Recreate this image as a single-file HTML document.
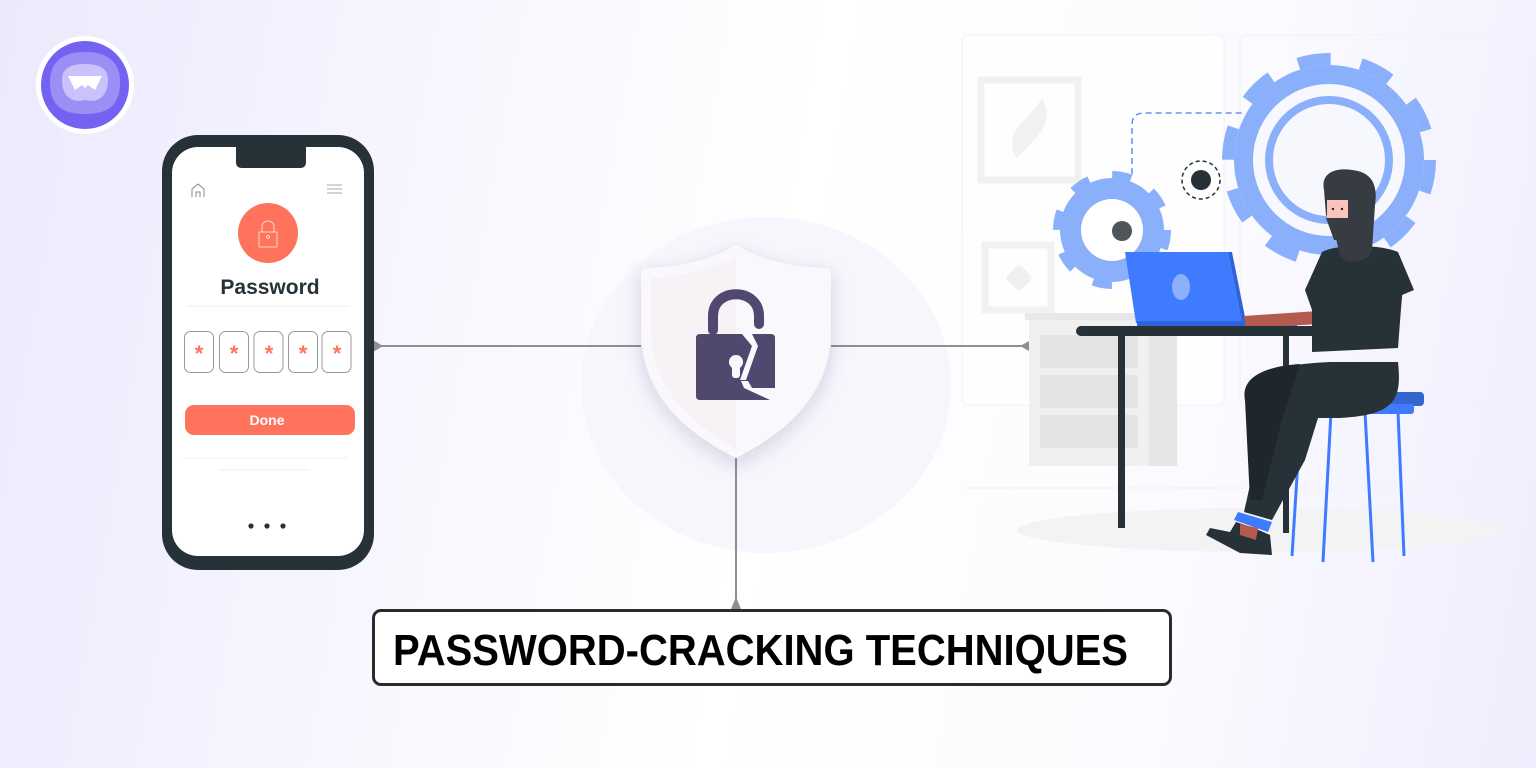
<!DOCTYPE html>
<html><head><meta charset="utf-8"><style>
html,body{margin:0;padding:0}
body{width:1536px;height:768px;overflow:hidden;position:relative;font-family:"Liberation Sans",sans-serif;
background:linear-gradient(100deg,#ece9fd 0%,#f6f5fe 25%,#ffffff 50%,#fbfbff 75%,#efedfd 100%);}
</style></head><body>
<svg width="1536" height="768" viewBox="0 0 1536 768" style="position:absolute;left:0;top:0">
<defs>
<filter id="sh" x="-30%" y="-30%" width="160%" height="160%"><feDropShadow dx="0" dy="6" stdDeviation="9" flood-color="#3b2e6a" flood-opacity="0.18"/></filter>
</defs>
<!-- logo -->
<circle cx="85" cy="85" r="49" fill="#fff"/>
<circle cx="85" cy="85" r="44" fill="#7463f3"/>
<path d="M85 52 C110 52 120 64 120 82 C120 104 110 114 85 114 C60 114 50 104 50 82 C50 64 60 52 85 52Z" fill="#9b8ff5"/>
<path d="M85 64 C102 64 108 70 108 80 C108 94 100 104 85 100 C70 104 62 94 62 80 C62 70 68 64 85 64Z" fill="#c9c2fb"/>
<path d="M68 76 L102 76 L95 90 L88 85 L85 88 L82 85 L75 90 Z" fill="#fff"/>
<!-- blob -->
<ellipse cx="766" cy="385" rx="185" ry="168" fill="#f7f6fc"/>
<!-- right scene bg -->
<rect x="962" y="35" width="262" height="370" rx="6" fill="#fefefe" stroke="#f2f2f5"/>
<rect x="1240" y="35" width="290" height="370" rx="6" fill="none" stroke="#f0f0f5"/>
<rect x="981" y="80" width="97" height="100" fill="none" stroke="#f1f1f1" stroke-width="7"/>
<path d="M1017 158 C1008 145 1012 130 1025 120 L1042 99 C1050 110 1048 125 1036 138Z" fill="#f1f1f1"/>
<rect x="985" y="245" width="66" height="65" fill="none" stroke="#f1f1f1" stroke-width="7"/>
<rect x="1009" y="268" width="20" height="20" rx="4" transform="rotate(45 1019 278)" fill="#f0f0f0"/>
<ellipse cx="1262" cy="530" rx="245" ry="22" fill="#f3f3f4"/>
<line x1="965" y1="488" x2="1500" y2="488" stroke="#f0f0f3"/>
<!-- connectors -->
<line x1="376" y1="346" x2="641" y2="346" stroke="#8f8f8f" stroke-width="2"/>
<polygon points="383,346 373,340 373,352" fill="#8f8f8f"/>
<line x1="831" y1="346" x2="1026" y2="346" stroke="#8f8f8f" stroke-width="2"/>
<polygon points="1020,346 1031,340 1031,352" fill="#8f8f8f"/>
<line x1="736" y1="458" x2="736" y2="603" stroke="#8f8f8f" stroke-width="2"/>
<polygon points="736,597 731,609 741,609" fill="#8f8f8f"/>
<!-- shield -->
<path d="M736 245 C705 263 675 267 647 268 C642 268 641 270 641 276 L641 330 C641 390 680 430 736 458 C792 430 831 390 831 330 L831 276 C831 270 830 268 825 268 C797 267 767 263 736 245Z" fill="#f9f8fd" filter="url(#sh)"/>
<path d="M736 256 C708 272 680 276 651 278 L651 330 C651 385 688 423 736 449Z" fill="#f8f2f6"/>
<!-- lock -->
<path d="M713 330 L713 316 C713 287 759 287 759 316 L759 324" fill="none" stroke="#51486f" stroke-width="10" stroke-linecap="round"/>
<path d="M700 334 L742 334 L752 346 L740 380 L746 380 L758 346 L752 334 L771 334 Q775 334 775 338 L775 388 L752 388 L748 381 L741 381 L744 388 L770 400 L700 400 Q696 400 696 396 L696 338 Q696 334 700 334Z" fill="#51486f"/>
<circle cx="736" cy="362" r="7" fill="#f9f8fd"/>
<rect x="732" y="362" width="8" height="16" rx="3" fill="#f9f8fd"/>
<!-- phone -->
<rect x="162" y="135" width="212" height="435" rx="36" fill="#263238"/>
<rect x="172" y="147" width="192" height="409" rx="26" fill="#fff"/>
<path d="M236 146 L306 146 L306 162 Q306 168 300 168 L242 168 Q236 168 236 162Z" fill="#263238"/>
<path d="M192 197 L192 189 L198 184 L204 189 L204 197 M196 197 L196 192 L200 192 L200 197" fill="none" stroke="#888" stroke-width="1"/>
<g stroke="#aaa" stroke-width="1"><line x1="327" y1="185" x2="342" y2="185"/><line x1="327" y1="189" x2="342" y2="189"/><line x1="327" y1="193" x2="342" y2="193"/></g>
<circle cx="268" cy="233" r="30" fill="#ff735c"/>
<rect x="259" y="232" width="18" height="15" rx="1" fill="none" stroke="#ffd7cf" stroke-width="1"/>
<path d="M262 232 L262 227 C262 219 274 219 274 227 L274 232" fill="none" stroke="#ffd7cf" stroke-width="1"/>
<circle cx="268" cy="237" r="1.5" fill="none" stroke="#ffd7cf"/>
<text x="270" y="294" text-anchor="middle" font-family="Liberation Sans" font-weight="bold" font-size="21" fill="#263238">Password</text>
<line x1="188" y1="306" x2="350" y2="306" stroke="#eee"/>
<g fill="#fff" stroke="#999" stroke-width="1">
<rect x="184.5" y="331.5" width="29" height="41" rx="6"/><rect x="219.5" y="331.5" width="29" height="41" rx="6"/><rect x="254" y="331.5" width="29" height="41" rx="6"/><rect x="288.5" y="331.5" width="29" height="41" rx="6"/><rect x="322" y="331.5" width="29" height="41" rx="6"/>
</g>
<g fill="#ff735c" font-family="Liberation Sans" font-weight="bold" font-size="22" text-anchor="middle">
<text x="199" y="361">*</text><text x="234" y="361">*</text><text x="269" y="361">*</text><text x="303" y="361">*</text><text x="337" y="361">*</text></g>
<rect x="185" y="405" width="170" height="30" rx="9" fill="#ff735c"/>
<text x="267" y="425" text-anchor="middle" font-family="Liberation Sans" font-weight="bold" font-size="14" fill="#fff">Done</text>
<line x1="183" y1="458" x2="348" y2="458" stroke="#f0f0f0"/>
<line x1="220" y1="470" x2="310" y2="470" stroke="#eee"/>
<g fill="#263238"><circle cx="251" cy="526" r="2.6"/><circle cx="267" cy="526" r="2.6"/><circle cx="283" cy="526" r="2.6"/></g>
<!-- cabinet -->
<rect x="1025" y="313" width="155" height="7" fill="#e8e8e8"/>
<rect x="1029" y="320" width="148" height="146" fill="#f0f0f0"/>
<rect x="1149" y="320" width="28" height="146" fill="#e6e6e6"/>
<rect x="1040" y="335" width="98" height="33" fill="#e4e4e4"/>
<rect x="1040" y="375" width="98" height="33" fill="#e4e4e4"/>
<rect x="1040" y="415" width="98" height="33" fill="#e4e4e4"/>
<!-- dashed -->
<path d="M1132 174 L1132 125 Q1132 113 1144 113 L1245 113" fill="none" stroke="#4a7ef0" stroke-width="1.3" stroke-dasharray="6 4"/>
<!-- big gear -->
<circle cx="1329" cy="160" r="95" fill="#8bb0fb"/>
<circle cx="1329" cy="160" r="101" fill="none" stroke="#8bb0fb" stroke-width="12" stroke-dasharray="33 30.5"/>
<circle cx="1329" cy="160" r="76" fill="#f7f7fe"/>
<circle cx="1329" cy="160" r="60" fill="none" stroke="#8bb0fb" stroke-width="8"/>
<!-- small gear -->
<circle cx="1112" cy="230" r="52" fill="#8bb0fb"/>
<circle cx="1112" cy="230" r="54" fill="none" stroke="#8bb0fb" stroke-width="10" stroke-dasharray="19 23.4"/>
<circle cx="1112" cy="230" r="31" fill="#fff"/>
<circle cx="1122" cy="231" r="10" fill="#4f5558"/>
<!-- tiny gear -->
<circle cx="1201" cy="180" r="19" fill="#fff" stroke="#263238" stroke-width="1.5" stroke-dasharray="4 3"/>
<circle cx="1201" cy="180" r="10" fill="#263238"/>
<!-- laptop -->
<polygon points="1125,252 1228,252 1242,323 1136,323" fill="#3f7bfe"/>
<polygon points="1228,252 1232,252 1246,322 1242,323" fill="#3063d9"/>
<ellipse cx="1181" cy="287" rx="9" ry="13" fill="#8db0fb"/>
<rect x="1137" y="321" width="160" height="6" rx="2" fill="#3063d9"/>
<!-- arms -->
<path d="M1244 316 L1318 311 L1320 324 L1246 328Z" fill="#b55a4f"/>
<path d="M1330 316 L1400 318 L1403 288 L1384 284 L1380 308 L1330 310Z" fill="#b55a4f"/>
<!-- desk -->
<rect x="1076" y="326" width="256" height="10" rx="5" fill="#263238"/>
<rect x="1118" y="335" width="7" height="193" fill="#263238"/>
<rect x="1283" y="335" width="6" height="198" fill="#263238"/>
<!-- stool -->
<rect x="1290" y="392" width="134" height="14" rx="4" fill="#3565d0"/>
<rect x="1290" y="404" width="124" height="10" rx="3" fill="#3f7bfe"/>
<g stroke="#3f7bfe" stroke-width="3"><line x1="1301" y1="412" x2="1292" y2="556"/><line x1="1331" y1="412" x2="1323" y2="562"/><line x1="1365" y1="412" x2="1373" y2="562"/><line x1="1398" y1="412" x2="1404" y2="556"/></g>
<!-- person -->
<path d="M1322 252 C1336 244 1380 244 1398 252 L1414 290 L1402 295 L1398 348 L1312 352 L1312 310 L1305 290Z" fill="#263238"/>
<path d="M1324 190 C1320 170 1340 168 1352 170 C1372 172 1378 185 1375 205 L1372 250 C1370 262 1345 266 1340 256 L1333 225 L1326 215Z" fill="#363c41"/>
<rect x="1327" y="200" width="21" height="18" fill="#f8c4bc"/>
<circle cx="1333" cy="209" r="1.2" fill="#222"/><circle cx="1342" cy="209" r="1.2" fill="#222"/>
<path d="M1326 218 L1348 218 L1348 200 L1360 200 L1352 240 L1334 240Z" fill="#363c41"/>
<path d="M1245 400 C1240 375 1280 364 1330 362 L1398 362 C1402 400 1395 415 1340 418 L1318 418 L1305 460 L1272 520 L1244 512 L1260 440 Z" fill="#263238"/>
<path d="M1245 400 C1240 375 1270 366 1300 364 L1282 420 L1262 500 L1250 500 Z" fill="#1f272c"/>
<polygon points="1238,512 1272,522 1268,532 1234,520" fill="#3f7bfe"/>
<path d="M1236 522 L1254 528 L1270 535 L1272 555 L1240 553 L1206 535 L1210 528 L1230 532Z" fill="#263238"/>
<path d="M1240 524 L1258 528 L1256 540 L1240 535Z" fill="#b55a4f"/>
</svg>
<!-- title box -->
<div style="position:absolute;left:372px;top:609px;width:794px;height:71px;border:3px solid #2b2b2b;border-radius:9px;background:#fff"></div>
<svg width="1536" height="768" style="position:absolute;left:0;top:0">
<text x="393" y="665" textLength="735" lengthAdjust="spacingAndGlyphs" font-family="Liberation Sans" font-weight="bold" font-size="44" fill="#000">PASSWORD-CRACKING TECHNIQUES</text>
</svg>
</body></html>
